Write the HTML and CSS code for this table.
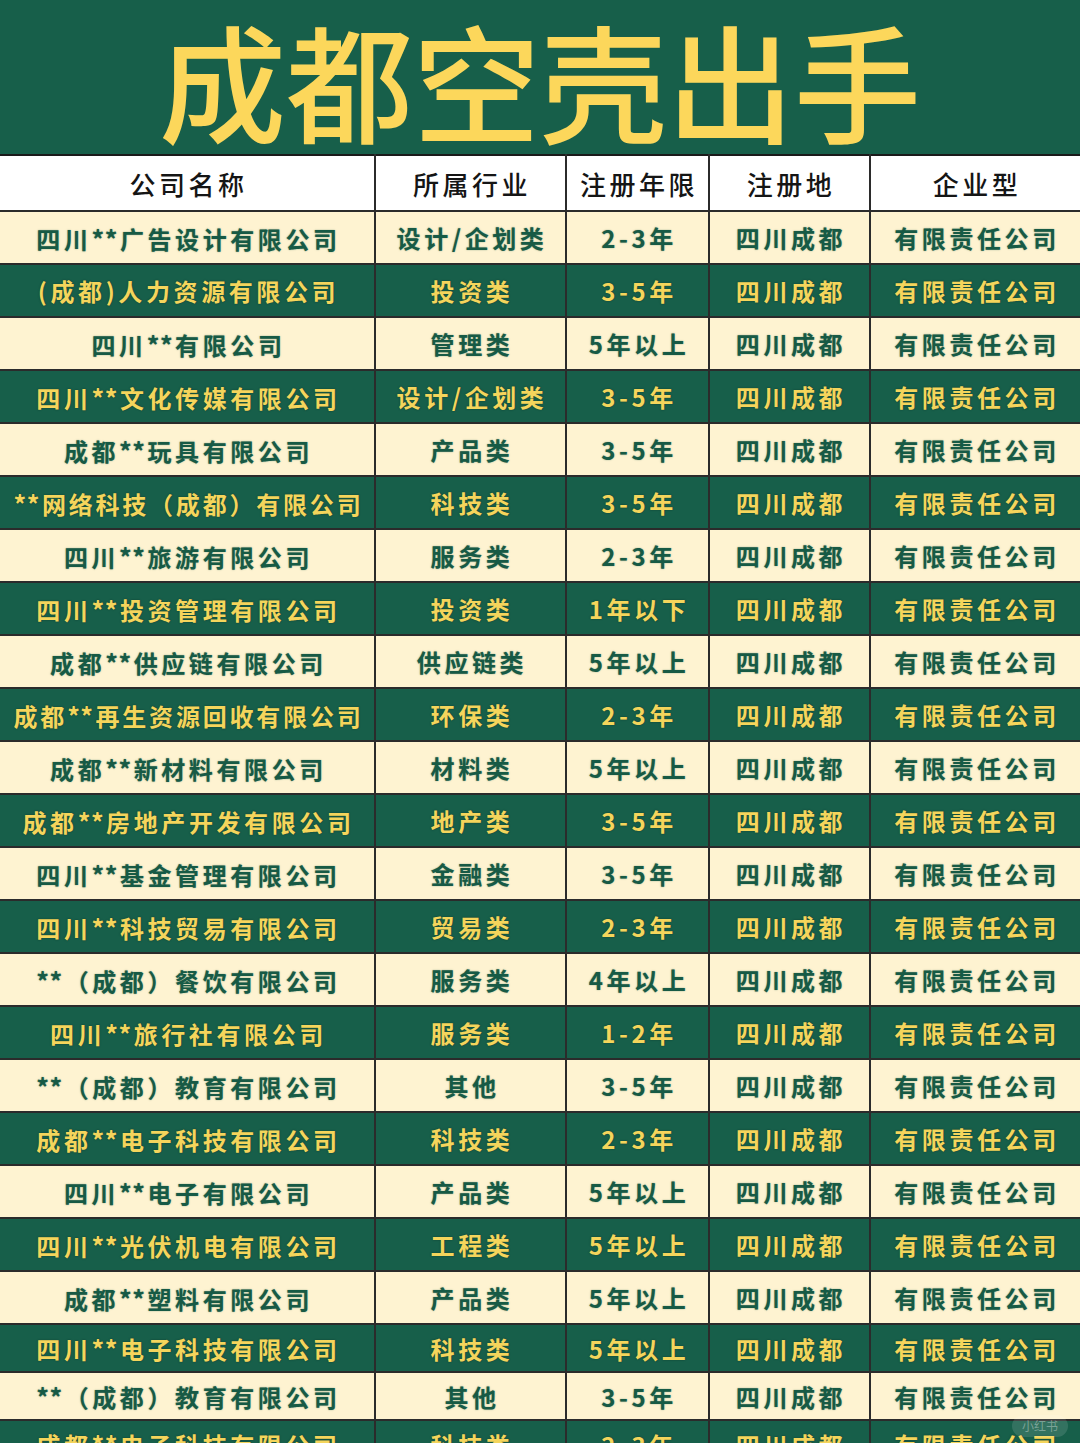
FILE: index.html
```html
<!DOCTYPE html>
<html lang="zh-CN">
<head>
<meta charset="utf-8">
<title>成都空壳出手</title>
<link rel="stylesheet" href="styles.css">
</head>
<body>
<div class="page">
  <header class="banner"><h1 class="title">成都空壳出手</h1></header>
  <table class="list">
    <colgroup>
      <col class="c1"><col class="c2"><col class="c3"><col class="c4"><col class="c5">
    </colgroup>
    <thead>
      <tr class="head"><th>公司名称</th><th>所属行业</th><th>注册年限</th><th>注册地</th><th>企业型</th></tr>
    </thead>
    <tbody>
      <tr class="cream"><td>四川<span class="ast">**</span>广告设计有限公司</td><td>设计/企划类</td><td>2-3年</td><td>四川成都</td><td>有限责任公司</td></tr>
      <tr class="green"><td>(成都)人力资源有限公司</td><td>投资类</td><td>3-5年</td><td>四川成都</td><td>有限责任公司</td></tr>
      <tr class="cream"><td>四川<span class="ast">**</span>有限公司</td><td>管理类</td><td>5年以上</td><td>四川成都</td><td>有限责任公司</td></tr>
      <tr class="green"><td>四川<span class="ast">**</span>文化传媒有限公司</td><td>设计/企划类</td><td>3-5年</td><td>四川成都</td><td>有限责任公司</td></tr>
      <tr class="cream"><td>成都<span class="ast">**</span>玩具有限公司</td><td>产品类</td><td>3-5年</td><td>四川成都</td><td>有限责任公司</td></tr>
      <tr class="green"><td class="tight"><span class="ast">**</span>网络科技（成都）有限公司</td><td>科技类</td><td>3-5年</td><td>四川成都</td><td>有限责任公司</td></tr>
      <tr class="cream"><td>四川<span class="ast">**</span>旅游有限公司</td><td>服务类</td><td>2-3年</td><td>四川成都</td><td>有限责任公司</td></tr>
      <tr class="green"><td>四川<span class="ast">**</span>投资管理有限公司</td><td>投资类</td><td>1年以下</td><td>四川成都</td><td>有限责任公司</td></tr>
      <tr class="cream"><td>成都<span class="ast">**</span>供应链有限公司</td><td>供应链类</td><td>5年以上</td><td>四川成都</td><td>有限责任公司</td></tr>
      <tr class="green"><td class="tight">成都<span class="ast">**</span>再生资源回收有限公司</td><td>环保类</td><td>2-3年</td><td>四川成都</td><td>有限责任公司</td></tr>
      <tr class="cream"><td>成都<span class="ast">**</span>新材料有限公司</td><td>材料类</td><td>5年以上</td><td>四川成都</td><td>有限责任公司</td></tr>
      <tr class="green"><td>成都<span class="ast">**</span>房地产开发有限公司</td><td>地产类</td><td>3-5年</td><td>四川成都</td><td>有限责任公司</td></tr>
      <tr class="cream"><td>四川<span class="ast">**</span>基金管理有限公司</td><td>金融类</td><td>3-5年</td><td>四川成都</td><td>有限责任公司</td></tr>
      <tr class="green"><td>四川<span class="ast">**</span>科技贸易有限公司</td><td>贸易类</td><td>2-3年</td><td>四川成都</td><td>有限责任公司</td></tr>
      <tr class="cream"><td><span class="ast">**</span>（成都）餐饮有限公司</td><td>服务类</td><td>4年以上</td><td>四川成都</td><td>有限责任公司</td></tr>
      <tr class="green"><td>四川<span class="ast">**</span>旅行社有限公司</td><td>服务类</td><td>1-2年</td><td>四川成都</td><td>有限责任公司</td></tr>
      <tr class="cream"><td><span class="ast">**</span>（成都）教育有限公司</td><td>其他</td><td>3-5年</td><td>四川成都</td><td>有限责任公司</td></tr>
      <tr class="green"><td>成都<span class="ast">**</span>电子科技有限公司</td><td>科技类</td><td>2-3年</td><td>四川成都</td><td>有限责任公司</td></tr>
      <tr class="cream"><td>四川<span class="ast">**</span>电子有限公司</td><td>产品类</td><td>5年以上</td><td>四川成都</td><td>有限责任公司</td></tr>
      <tr class="green"><td>四川<span class="ast">**</span>光伏机电有限公司</td><td>工程类</td><td>5年以上</td><td>四川成都</td><td>有限责任公司</td></tr>
      <tr class="cream"><td>成都<span class="ast">**</span>塑料有限公司</td><td>产品类</td><td>5年以上</td><td>四川成都</td><td>有限责任公司</td></tr>
      <tr class="green short"><td>四川<span class="ast">**</span>电子科技有限公司</td><td>科技类</td><td>5年以上</td><td>四川成都</td><td>有限责任公司</td></tr>
      <tr class="cream short"><td><span class="ast">**</span>（成都）教育有限公司</td><td>其他</td><td>3-5年</td><td>四川成都</td><td>有限责任公司</td></tr>
      <tr class="green short"><td>成都<span class="ast">**</span>电子科技有限公司</td><td>科技类</td><td>2-3年</td><td>四川成都</td><td>有限责任公司</td></tr>
    </tbody>
  </table>
  <div class="mark">小红书</div>
</div>
</body>
</html>
```

FILE: styles.css
```css
html, body {
  margin: 0;
  padding: 0;
  background: #175f4a;
}
body {
  width: 1080px;
  height: 1443px;
  overflow: hidden;
  font-family: "Noto Sans CJK SC", "Noto Sans", sans-serif;
}
.page {
  position: relative;
  width: 1080px;
  height: 1443px;
  overflow: hidden;
}
.banner {
  height: 154px;
  background: #175f4a;
  display: flex;
  justify-content: center;
  align-items: center;
}
.title {
  margin: 0;
  padding-top: 4px;
  font-size: 127px;
  font-weight: 500;
  line-height: 1;
  color: #fcd75b;
  letter-spacing: 0;
}
.list {
  width: 1080px;
  border-collapse: collapse;
  table-layout: fixed;
}
.c1 { width: 375px; }
.c2 { width: 191px; }
.c3 { width: 143px; }
.c4 { width: 161px; }
.c5 { width: 210px; }
.list th, .list td {
  padding: 0 0 0 3px;
  text-align: center;
  white-space: nowrap;
  border: 2px solid #2b2b2b;
}
.list tr > :first-child { border-left: none; }
.list tr > :last-child { border-right: none; }
.head {
  height: 56px;
  background: #ffffff;
}
.head th {
  font-size: 26px;
  font-weight: 500;
  color: #151515;
  letter-spacing: 3.5px;
  border-top: 2px solid #1a1a1a;
  padding-top: 0;
}
tbody tr {
  height: 53px;
}
tbody tr.short {
  height: 48px;
}
tbody td {
  font-size: 24px;
  font-weight: 700;
  letter-spacing: 3.6px;
  padding-bottom: 3px;
}
tbody td.tight {
  letter-spacing: 2.8px;
}
.ast {
  font-size: 25px;
  letter-spacing: 0.5px;
  margin-right: 2px;
}
.cream {
  background: #fef3d1;
}
.cream td {
  color: #175a45;
  text-shadow: 0 0 1.5px rgba(23, 90, 69, 0.55);
}
.green {
  background: #175f4a;
}
.green td {
  color: #f4d55c;
  text-shadow: 0 0 1.5px rgba(10, 40, 30, 0.8);
}
.mark {
  position: absolute;
  right: 12px;
  bottom: 6px;
  padding: 2px 10px;
  border-radius: 12px;
  background: rgba(255, 255, 255, 0.12);
  color: rgba(255, 255, 255, 0.35);
  font-size: 12px;
  line-height: 18px;
}
```
